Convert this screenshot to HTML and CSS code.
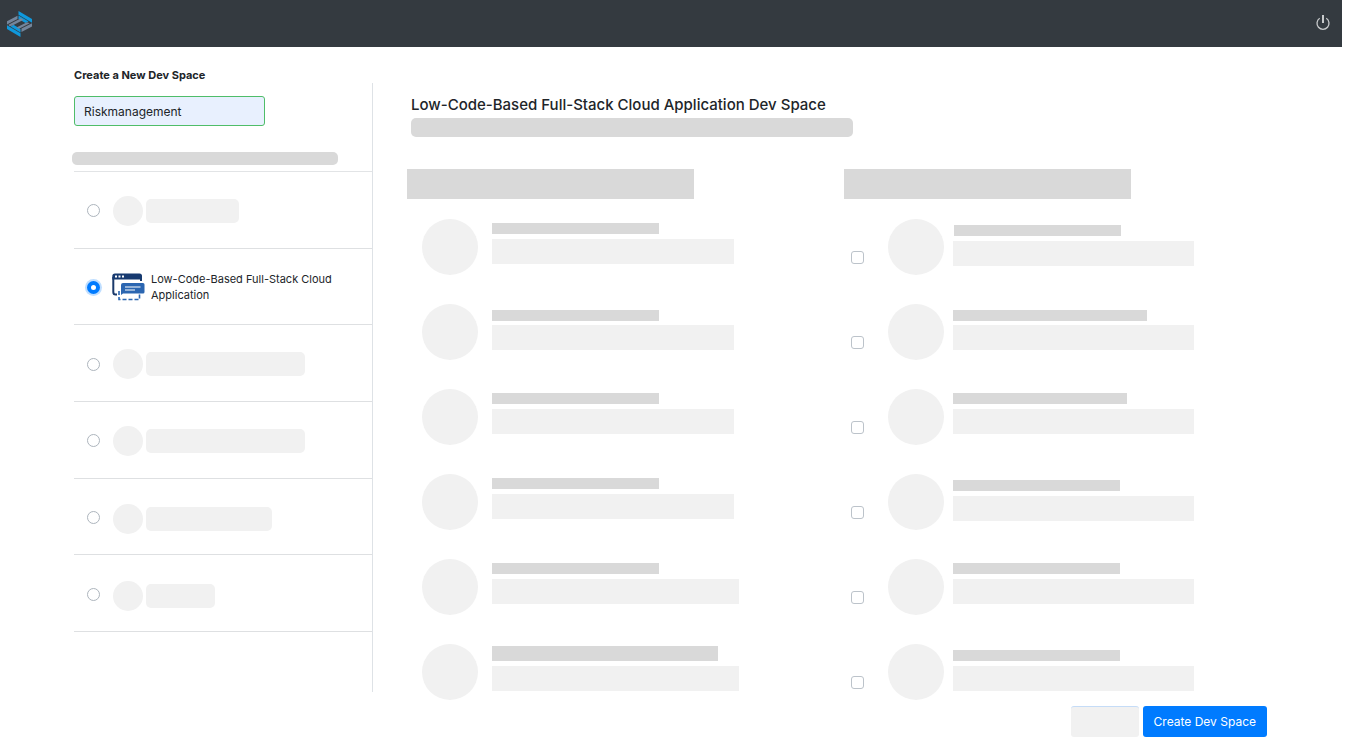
FILE: index.html
```html
<!DOCTYPE html>
<html lang="en">
<head>
<meta charset="utf-8">
<title>Create a New Dev Space</title>
<link rel="stylesheet" href="styles.css">
</head>
<body>
<header class="topbar">
  <a class="logo" href="#" aria-label="Home">
    <svg width="26" height="26" viewBox="0 0 26 26">
      <g fill="#0f98dc">
        <path d="M11.500 0 25 8V11.800L11.500 3.800ZM11.500 4.600 21.500 10.500 18.500 12 11.500 8Z"/>
        <path d="M0 14.200 13.500 22.200V26L0 18ZM3.500 15.400 6.500 13.800 13.500 18V21.400Z"/>
      </g>
      <g fill="#74859b">
        <path d="M0 10.200 10.500 4.800V8L0 13.400ZM1.500 13.800 14 7.300 16.500 8.700 5 14.800 2.500 15.200Z"/>
        <path d="M9.500 16.500 20 11.200 22.700 12.200 12 17.800ZM14.500 17.600 25 12.300V15.500L14.500 21Z"/>
      </g>
    </svg>
  </a>
  <button class="power" type="button" aria-label="Sign out">
    <svg width="16" height="16" viewBox="0 0 16 16" fill="none" stroke="#c8cacc">
      <path d="M4.700 3.300A6 6 0 1 0 11.300 3.300" stroke-width="1.300"/>
      <path d="M8 0V8" stroke-width="2"/>
    </svg>
  </button>
</header>
<h1 class="page-title"><label for="space-name">Create a New Dev Space</label></h1>
<main class="layout">
  <section class="sidebar">
    <input class="name-input" id="space-name" type="text" value="Riskmanagement">
    <div class="bar kind-label"></div>
    <div class="kinds">
      <label class="kind"><input type="radio" name="kind" aria-label="Kind 1"><span class="dot"></span><span class="pill w93"></span></label>
      <label class="kind"><input type="radio" name="kind" checked>
        <svg class="kind-icon" width="33" height="28" viewBox="0 0 33 28" fill="none">
          <path d="M5 21.500H3.500Q1.300 21.500 1.300 19V4M29 8V4" stroke="#1b3a6b" stroke-width="2"/>
          <path d="M.3 6.500V3Q.3 .5 3 .5H27.500Q30 .5 30 3V6.500Z" fill="#173a70"/>
          <path d="M3 3.500H5M6.500 3.500H8.500M10 3.500H12" stroke="#fff" stroke-width="1.800"/>
          <path d="M7 18V26.500H27.500V20.500" stroke="#2b66b1" stroke-width="1.600" stroke-dasharray="4 2"/>
          <path d="M11 10H31Q32.500 10 32.500 11.500V19Q32.500 20.500 31 20.500H11L9 22V12Q9 10 11 10Z" fill="#2b66b1"/>
          <path d="M13 14H28.500M13 17H23" stroke="#fff" stroke-width="1.200"/>
        </svg>
        <span class="kind-name">Low-Code-Based Full-Stack Cloud Application</span></label>
      <label class="kind"><input type="radio" name="kind" aria-label="Kind 3"><span class="dot"></span><span class="pill w159"></span></label>
      <label class="kind"><input type="radio" name="kind" aria-label="Kind 4"><span class="dot"></span><span class="pill w159"></span></label>
      <label class="kind kind-low"><input type="radio" name="kind" aria-label="Kind 5"><span class="dot"></span><span class="pill w126"></span></label>
      <label class="kind kind-low"><input type="radio" name="kind" aria-label="Kind 6"><span class="dot"></span><span class="pill w69"></span></label>
    </div>
  </section>
  <section class="panel">
    <h2 class="panel-title">Low-Code-Based Full-Stack Cloud Application Dev Space</h2>
    <div class="bar panel-desc"></div>
    <div class="columns">
      <div class="column">
        <div class="column-head"></div>
        <div class="items">
          <div class="item"><span class="disc"></span><span class="lines"><i class="line w167"></i><i class="block w242"></i></span></div>
          <div class="item"><span class="disc"></span><span class="lines tight"><i class="line w167"></i><i class="block w242"></i></span></div>
          <div class="item"><span class="disc"></span><span class="lines"><i class="line w167"></i><i class="block w242"></i></span></div>
          <div class="item"><span class="disc"></span><span class="lines"><i class="line w167"></i><i class="block w242"></i></span></div>
          <div class="item"><span class="disc"></span><span class="lines"><i class="line w167"></i><i class="block w247"></i></span></div>
          <div class="item"><span class="disc"></span><span class="lines"><i class="line tall w226"></i><i class="block w247"></i></span></div>
        </div>
      </div>
      <div class="column">
        <div class="column-head"></div>
        <div class="items">
          <label class="item option"><input type="checkbox" aria-label="Extension 1"><span class="disc"></span><span class="lines low"><i class="line indent w167"></i><i class="block w241"></i></span></label>
          <label class="item option"><input type="checkbox" aria-label="Extension 2"><span class="disc"></span><span class="lines tight"><i class="line w194"></i><i class="block w241"></i></span></label>
          <label class="item option"><input type="checkbox" aria-label="Extension 3"><span class="disc"></span><span class="lines"><i class="line w174"></i><i class="block w241"></i></span></label>
          <label class="item option"><input type="checkbox" aria-label="Extension 4"><span class="disc"></span><span class="lines low"><i class="line w167"></i><i class="block w241"></i></span></label>
          <label class="item option"><input type="checkbox" aria-label="Extension 5"><span class="disc"></span><span class="lines"><i class="line w167"></i><i class="block w241"></i></span></label>
          <label class="item option"><input type="checkbox" aria-label="Extension 6"><span class="disc"></span><span class="lines low"><i class="line w167"></i><i class="block w241"></i></span></label>
        </div>
      </div>
    </div>
    <div class="actions">
      <button class="btn btn-blank" type="button" aria-label="Cancel"></button>
      <button class="btn btn-primary" type="button">Create Dev Space</button>
    </div>
  </section>
</main>
</body>
</html>
```
FILE: styles.css
```css
* { box-sizing: border-box; }
body {
  margin: 0;
  background: #fff;
  color: #212529;
  font-family: Inter, "Liberation Sans", sans-serif;
}
.topbar {
  display: flex;
  align-items: center;
  justify-content: space-between;
  height: 47px;
  margin-right: 6px;
  padding: 0 11px 0 7px;
  background: #343a40;
}
.logo { display: flex; }
.power {
  display: flex;
  margin-bottom: 2px;
  padding: 0;
  border: 0;
  background: none;
}
.page-title {
  margin: 0;
  padding: 20px 0 0 74px;
  font-size: 11px;
  line-height: 16px;
  font-weight: 700;
}
.layout {
  display: flex;
  align-items: flex-start;
  padding-left: 74px;
}
.sidebar {
  flex: 0 0 299px;
  padding: 13px 0 60px;
  border-right: 1px solid #dee2e6;
}
.name-input {
  display: block;
  width: 191px;
  height: 30px;
  padding: 0 9px;
  border: 1px solid #4fbd69;
  border-radius: 3px;
  background: #e8f0fe;
  color: #212529;
  font: 12px Inter, "Liberation Sans", sans-serif;
}
.bar {
  border-radius: 5px;
  background: #d9d9d9;
}
.kind-label {
  width: 266px;
  height: 13px;
  margin: 26px 0 6px -2px;
}
.kinds {
  display: grid;
  grid-auto-rows: 1fr;
  min-height: 461px;
  border-top: 1px solid #e2e4e6;
}
.kind {
  display: flex;
  align-items: center;
  padding: 2px 0 0 13px;
  border-bottom: 1px solid #dee0e2;
}
.kind input, .option input {
  appearance: none;
  flex: none;
  width: 13px;
  height: 13px;
  margin: 0;
  border: 1px solid #adb5bd;
  background: #fff;
}
.kind input { border-radius: 50%; }
.kind input:checked {
  border: 4px solid #007bff;
  box-shadow: 0 0 0 2px #bfdeff;
}
.dot {
  width: 30px;
  height: 30px;
  margin: 0 3px 0 13px;
  border-radius: 50%;
  background: #f1f1f1;
}
.pill {
  height: 24px;
  border-radius: 5px;
  background: #f1f1f1;
}
.kind-low .dot, .kind-low .pill { margin-top: 4px; }
.kind-icon {
  flex: none;
  margin: 0 6px 0 12px;
}
.kind-name {
  max-width: 190px;
  font-size: 11px;
  line-height: 16px;
}
.panel {
  flex: 1;
  min-width: 0;
  padding: 12px 67px 10px 34px;
}
.panel-title {
  margin: 0 0 3px 4px;
  font-size: 15px;
  line-height: 20px;
  font-weight: 500;
}
.panel-desc {
  width: 442px;
  height: 19px;
  margin-left: 4px;
}
.columns {
  display: grid;
  grid-template-columns: 1fr 1fr;
  margin-top: 32px;
}
.column-head {
  width: 287px;
  height: 30px;
  background: #d9d9d9;
}
.items {
  display: flex;
  flex-direction: column;
  gap: 29px;
  padding-top: 20px;
}
.item {
  display: flex;
  align-items: center;
  gap: 14px;
  height: 56px;
  padding-left: 15px;
}
.option {
  gap: 9px;
  padding-left: 7px;
}
.option input {
  margin: 20px 15px 0 0;
  border-color: #bcc3ca;
  border-radius: 3px;
}
.option input:checked { background: #007bff; }
.disc {
  width: 56px;
  height: 56px;
  border-radius: 50%;
  background: #f1f1f1;
}
.lines {
  display: flex;
  flex-direction: column;
  gap: 5px;
  padding-bottom: 8px;
}
.lines.low { padding-bottom: 4px; }
.lines.tight { gap: 4px; padding-bottom: 5px; }
.line {
  height: 11px;
  background: #d9d9d9;
}
.line.tall { height: 15px; }
.line.indent { margin-left: 1px; }
.block {
  height: 25px;
  background: #f1f1f1;
}
.w69 { width: 69px; }
.w93 { width: 93px; }
.w126 { width: 126px; }
.w159 { width: 159px; }
.w167 { width: 167px; }
.w174 { width: 174px; }
.w194 { width: 194px; }
.w226 { width: 226px; }
.w241 { width: 241px; }
.w242 { width: 242px; }
.w247 { width: 247px; }
.actions {
  display: flex;
  justify-content: flex-end;
  gap: 4px;
  padding: 6px 14px 0 0;
}
.btn {
  height: 31px;
  padding: 0 11px;
  border: 0;
  border-radius: 3px;
  font: 12px Inter, "Liberation Sans", sans-serif;
}
.btn-blank {
  width: 68px;
  border-top: 1px solid #c5dcf7;
  background: #f1f1f1;
}
.btn-primary {
  background: #007bff;
  color: #fff;
}
```
